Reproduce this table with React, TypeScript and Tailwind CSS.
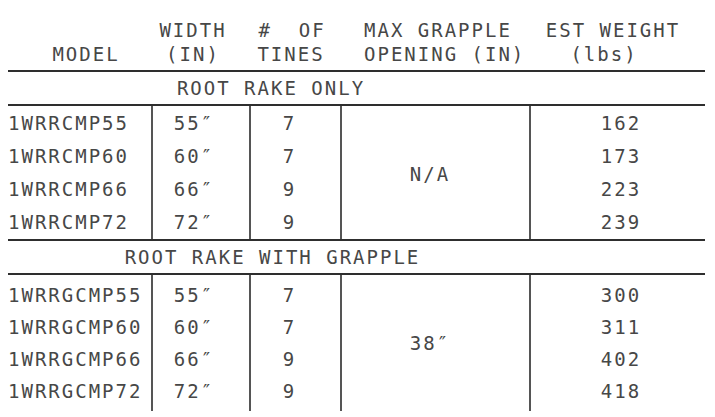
import React from "react";

const g1 = [
  ["1WRRCMP55", "55″", "7", "162"],
  ["1WRRCMP60", "60″", "7", "173"],
  ["1WRRCMP66", "66″", "9", "223"],
  ["1WRRCMP72", "72″", "9", "239"],
];
const g2 = [
  ["1WRRGCMP55", "55″", "7", "300"],
  ["1WRRGCMP60", "60″", "7", "311"],
  ["1WRRGCMP66", "66″", "9", "402"],
  ["1WRRGCMP72", "72″", "9", "418"],
];

function Group({ rows, mid, rowH, pt }: { rows: string[][]; mid: string; rowH: string; pt: string }) {
  return (
    <div className="flex h-[136px]">
      <div className={`flex flex-col ${pt}`}>
        {rows.map((r) => (
          <div key={r[0]} className={`flex ${rowH}`}>
            <div className="w-[143px] whitespace-pre">{r[0]}</div>
            <div className="w-[98px] text-center pr-[12px]">{r[1]}</div>
            <div className="w-[91px] text-center pr-[10px]">{r[2]}</div>
          </div>
        ))}
      </div>
      <div className="w-[189px] flex items-center justify-center pr-[9px]">{mid}</div>
      <div className={`flex flex-col ${pt}`}>
        {rows.map((r) => (
          <div key={r[0]} className={`w-[174px] text-center pl-[10px] ${rowH}`}>
            {r[3]}
          </div>
        ))}
      </div>
    </div>
  );
}

function VLines() {
  return (
    <>
      <div className="absolute left-[143px] top-0 bottom-0 w-[2px] bg-[#555]" />
      <div className="absolute left-[241px] top-0 bottom-0 w-[2px] bg-[#555]" />
      <div className="absolute left-[332px] top-0 bottom-0 w-[2px] bg-[#555]" />
      <div className="absolute left-[521px] top-0 bottom-0 w-[2px] bg-[#555]" />
    </>
  );
}

export default function App() {
  return (
    <div className="w-[715px] h-[417px] bg-white overflow-hidden text-[#474747] font-['DejaVu_Sans_Mono',monospace] text-[19px] tracking-[2px]">
      <div className="ml-[8px] w-[697px] relative">
        {/* header */}
        <div className="flex h-[70px] pb-[4px] leading-[24px] whitespace-pre">
          <div className="w-[145px] flex flex-col justify-end items-center pl-[11px]">MODEL</div>
          <div className="w-[98px] flex flex-col justify-end items-center pr-[18px]">
            <span>WIDTH</span>
            <span>(IN)</span>
          </div>
          <div className="w-[91px] flex flex-col justify-end items-center pr-[9px]">
            <span>#  OF</span>
            <span className="pr-[2px]">TINES</span>
          </div>
          <div className="w-[189px] flex flex-col justify-end items-start pl-[22px]">
            <span>MAX GRAPPLE</span>
            <span>OPENING (IN)</span>
          </div>
          <div className="w-[174px] flex flex-col justify-end items-center">
            <span className="pr-[10px]">EST WEIGHT</span>
            <span className="pr-[28px]">(lbs)</span>
          </div>
        </div>
        <div className="h-[2px] bg-[#2e2e2e]" />
        <div className="h-[32px] w-[526px] flex items-center justify-center leading-[32px] whitespace-pre">
          ROOT RAKE ONLY
        </div>
        <div className="h-[2px] bg-[#2e2e2e]" />
        <div className="relative h-[133px] leading-[33px]">
          <VLines />
          <div className="h-[133px] overflow-hidden">
            <Group rows={g1} mid="N/A" rowH="h-[33px]" pt="pt-[1px]" />
          </div>
        </div>
        <div className="h-[2px] bg-[#2e2e2e]" />
        <div className="h-[32px] w-[529px] flex items-center justify-center leading-[32px] whitespace-pre">
          ROOT RAKE WITH GRAPPLE
        </div>
        <div className="h-[2px] bg-[#2e2e2e]" />
        <div className="relative h-[136px] leading-[32px]">
          <VLines />
          <Group rows={g2} mid="38″" rowH="h-[32px]" pt="pt-[4px]" />
        </div>
      </div>
    </div>
  );
}
